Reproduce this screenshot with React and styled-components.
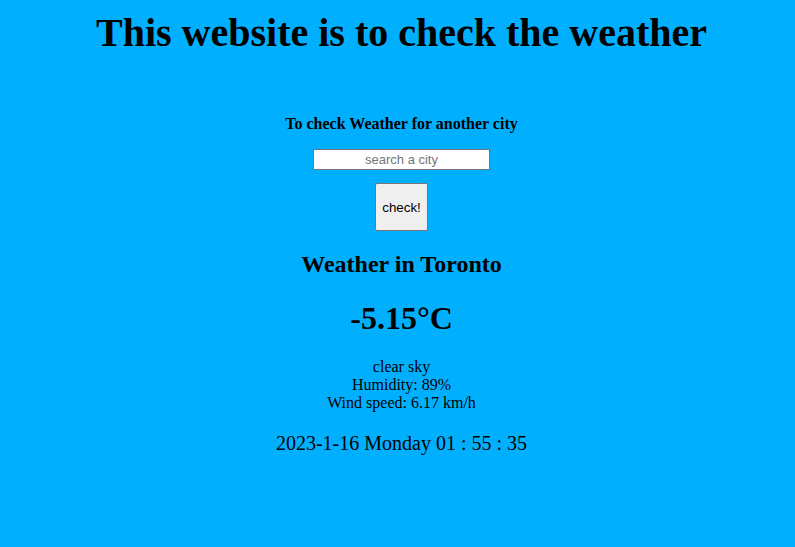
import React from 'react'
import styled, { createGlobalStyle } from 'styled-components'

const GlobalStyle = createGlobalStyle`
    html, body {
        margin: 0;
        padding: 0;
        background: #00b0ff;
    }
    body {
        font-family: "Liberation Serif", "Times New Roman", serif;
        color: #000;
    }
`

function App() {
    return (
        <>
            <GlobalStyle />
            <Page>
                <Title>This website is to check the weather</Title>
                <SearchTitle>To check Weather for another city</SearchTitle>
                <SearchInput type="text" placeholder="search a city" />
                <CheckButton>check!</CheckButton>
                <CityTitle>Weather in Toronto</CityTitle>
                <Temperature>-5.15°C</Temperature>
                <Details>
                    <span>clear sky</span>
                    <span>Humidity: 89%</span>
                    <span>Wind speed: 6.17 km/h</span>
                </Details>
                <Clock>2023-1-16 Monday 01 : 55 : 35</Clock>
            </Page>
        </>
    )
}

export default App;

const Page = styled.div`
    display: flex;
    flex-direction: column;
    align-items: center;
    text-align: center;
    padding: 10px 0 0 8px;
`

const Title = styled.h1`
    font-size: 40px;
    line-height: 46px;
    font-weight: bold;
    margin: 0 0 59px;
`

const SearchTitle = styled.h4`
    font-size: 16px;
    line-height: 18px;
    font-weight: bold;
    margin: 0 0 16px;
`

const SearchInput = styled.input`
    width: 177px;
    height: 21px;
    box-sizing: border-box;
    border: 1px solid #767676;
    padding: 1px 2px;
    font-family: "Liberation Sans", Arial, sans-serif;
    font-size: 13px;
    text-align: center;
    background: #fff;
    margin: 0 0 13px;

    &::placeholder {
        color: #757575;
    }
`

const CheckButton = styled.button`
    width: 53px;
    height: 48px;
    box-sizing: border-box;
    background: #efefef;
    border: 1px solid #767676;
    border-radius: 2px;
    font-family: "Liberation Sans", Arial, sans-serif;
    font-size: 13.33px;
    color: #000;
    padding: 0;
    margin: 0 0 19px;
`

const CityTitle = styled.h2`
    font-size: 24px;
    line-height: 28px;
    font-weight: bold;
    margin: 0 0 21px;
`

const Temperature = styled.h1`
    font-size: 32px;
    line-height: 38px;
    font-weight: bold;
    margin: 0 0 21px;
`

const Details = styled.div`
    display: flex;
    flex-direction: column;
    font-size: 16px;
    line-height: 18px;
    margin-bottom: 20px;
`

const Clock = styled.div`
    font-size: 20px;
    line-height: 23px;
`
